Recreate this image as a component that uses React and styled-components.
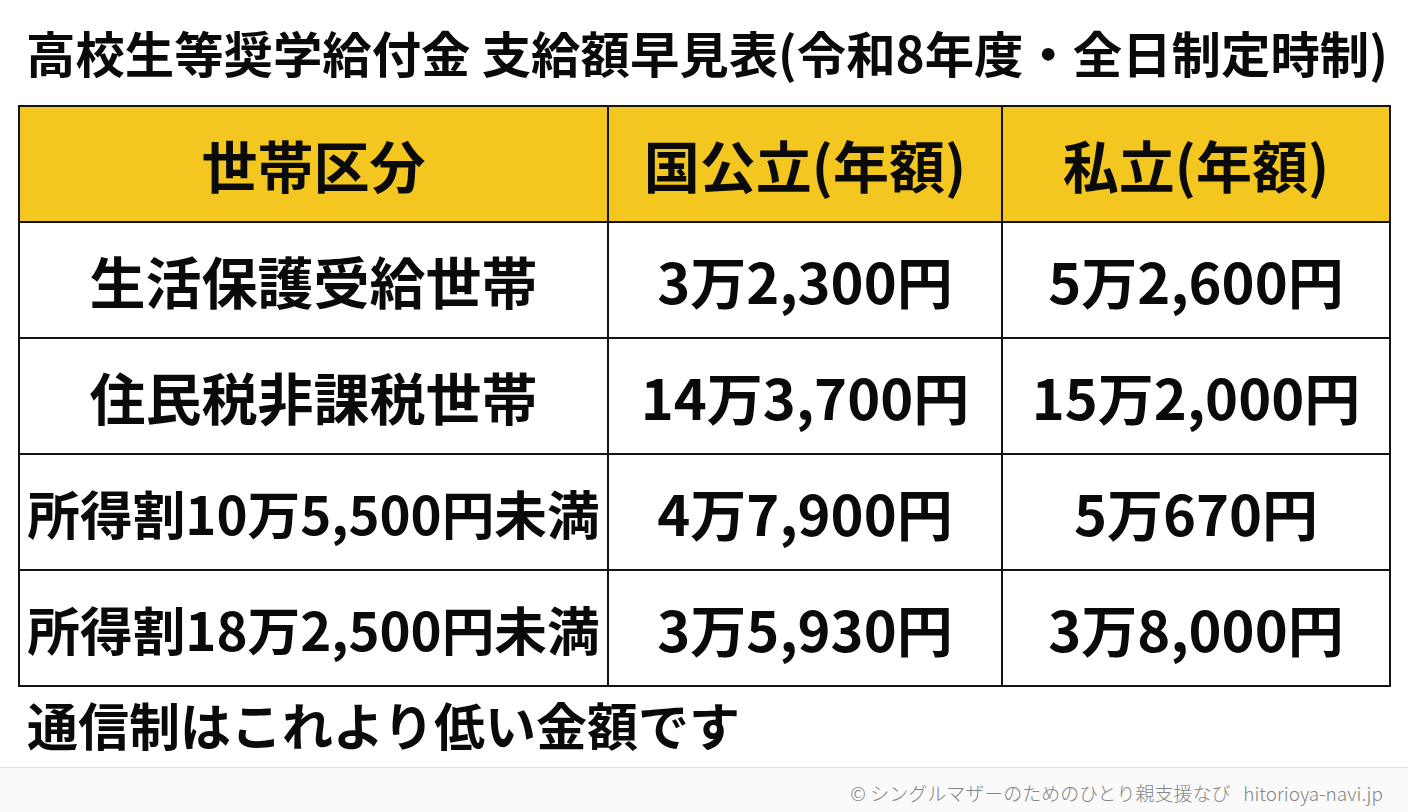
import React from "react";
import styled, { createGlobalStyle } from "styled-components";

const Global = createGlobalStyle`
  html, body { margin: 0; padding: 0; background: #ffffff; }
  body { font-family: "Noto Sans CJK JP", "Noto Sans", sans-serif; color: #0a0a0a; }
`;

const Page = styled.div`
  width: 1408px;
  height: 812px;
  display: flex;
  flex-direction: column;
  background: #ffffff;
  overflow: hidden;
`;

const Main = styled.div`
  padding: 0 17px 0 18px;
  display: flex;
  flex-direction: column;
  height: 767px;
`;

const Title = styled.h1`
  margin: 0;
  height: 105px;
  display: flex;
  align-items: center;
  padding-left: 8px;
  padding-bottom: 2px;
  box-sizing: border-box;
  font-size: 49.4px;
  font-weight: 700;
  line-height: 1;
  white-space: nowrap;
`;

const Grid = styled.div`
  display: grid;
  grid-template-columns: 587px 392px 386px;
  grid-auto-rows: 114px;
  gap: 2px;
  padding: 2px;
  background: #141414;
  width: 1373px;
  box-sizing: border-box;
`;

const Cell = styled.div`
  background: ${(p) => (p.$head ? "#F3C71F" : "#ffffff")};
  display: flex;
  align-items: center;
  justify-content: center;
  font-size: ${(p) => p.$size || 56}px;
  font-weight: 700;
  line-height: 1;
  white-space: nowrap;
`;

const Note = styled.p`
  margin: 0;
  padding: 12px 0 0 9px;
  font-size: 51px;
  font-weight: 700;
  line-height: 1;
`;

const Footer = styled.footer`
  flex: 1;
  border-top: 1px solid #e2e2dc;
  background: #fafafa;
  display: flex;
  align-items: center;
  justify-content: flex-end;
  padding: 4px 25px 0 0;
  font-size: 19px;
  font-weight: 300;
  color: #858585;
  white-space: pre;
`;

const rows = [
  ["生活保護受給世帯", "3万2,300円", "5万2,600円"],
  ["住民税非課税世帯", "14万3,700円", "15万2,000円"],
  ["所得割10万5,500円未満", "4万7,900円", "5万670円"],
  ["所得割18万2,500円未満", "3万5,930円", "3万8,000円"],
];

export default function App() {
  return (
    <Page>
      <Global />
      <Main>
        <Title>高校生等奨学給付金 支給額早見表(令和8年度・全日制定時制)</Title>
        <Grid>
          <Cell $head>世帯区分</Cell>
          <Cell $head>国公立(年額)</Cell>
          <Cell $head>私立(年額)</Cell>
          {rows.map((r) => (
            <React.Fragment key={r[0]}>
              <Cell $size={r[0].length > 10 ? 52.7 : 56}>{r[0]}</Cell>
              <Cell>{r[1]}</Cell>
              <Cell>{r[2]}</Cell>
            </React.Fragment>
          ))}
        </Grid>
        <Note>通信制はこれより低い金額です</Note>
      </Main>
      <Footer>{"© シングルマザーのためのひとり親支援なび   hitorioya-navi.jp"}</Footer>
    </Page>
  );
}
